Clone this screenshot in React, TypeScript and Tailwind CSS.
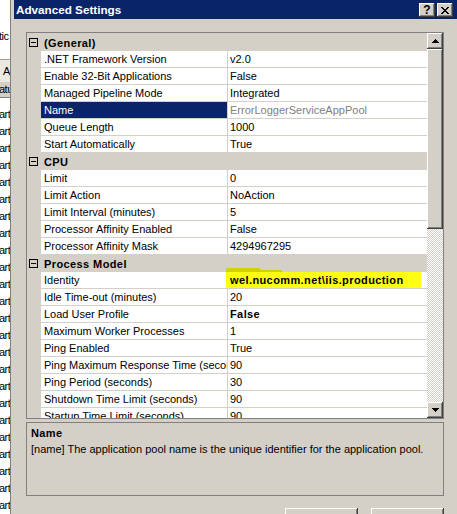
import React from "react";

type Row = {
  name: string;
  value: string;
  selected?: boolean;
  bold?: boolean;
  marked?: boolean;
  readOnly?: boolean;
};

type Section = { title: string; rows: Row[] };

const sections: Section[] = [
  {
    title: "(General)",
    rows: [
      { name: ".NET Framework Version", value: "v2.0" },
      { name: "Enable 32-Bit Applications", value: "False" },
      { name: "Managed Pipeline Mode", value: "Integrated" },
      { name: "Name", value: "ErrorLoggerServiceAppPool", selected: true, readOnly: true },
      { name: "Queue Length", value: "1000" },
      { name: "Start Automatically", value: "True" },
    ],
  },
  {
    title: "CPU",
    rows: [
      { name: "Limit", value: "0" },
      { name: "Limit Action", value: "NoAction" },
      { name: "Limit Interval (minutes)", value: "5" },
      { name: "Processor Affinity Enabled", value: "False" },
      { name: "Processor Affinity Mask", value: "4294967295" },
    ],
  },
  {
    title: "Process Model",
    rows: [
      { name: "Identity", value: "wel.nucomm.net\\iis.production", marked: true, bold: true },
      { name: "Idle Time-out (minutes)", value: "20" },
      { name: "Load User Profile", value: "False", bold: true },
      { name: "Maximum Worker Processes", value: "1" },
      { name: "Ping Enabled", value: "True" },
      { name: "Ping Maximum Response Time (seconds)", value: "90" },
      { name: "Ping Period (seconds)", value: "30" },
      { name: "Shutdown Time Limit (seconds)", value: "90" },
      { name: "Startup Time Limit (seconds)", value: "90" },
    ],
  },
];

// classic 3d raised face
const raised =
  "bg-[#d4d0c8] shadow-[inset_-1px_-1px_0_#404040,inset_1px_1px_0_#ffffff,inset_-2px_-2px_0_#808080]";

function Arrow({ down }: { down?: boolean }) {
  return (
    <svg width="7" height="4" viewBox="0 0 7 4" shapeRendering="crispEdges">
      <path d={down ? "M0 0H7L3.5 4Z" : "M3.5 0L7 4H0Z"} fill="#000" />
    </svg>
  );
}

function CloseGlyph() {
  return (
    <svg width="8" height="7" viewBox="0 0 8 7" shapeRendering="crispEdges">
      <path
        fill="#000"
        d="M0 0h2v1H0zM6 0h2v1H6zM1 1h2v1H1zM5 1h2v1H5zM2 2h4v1H2zM3 3h2v1H3zM2 4h4v1H2zM1 5h2v1H1zM5 5h2v1H5zM0 6h2v1H0zM6 6h2v1H6z"
      />
    </svg>
  );
}

// the window behind the dialog, only a sliver shows
function LeftStrip() {
  const rows = Array.from({ length: 24 });
  return (
    <div className="w-[10px] shrink-0 bg-white overflow-hidden flex flex-col text-black whitespace-nowrap tracking-[-0.5px]">
      <div className="h-[30px]" />
      <div className="h-[16px] leading-[16px] ml-[-1px]">tic</div>
      <div className="h-[16px]" />
      <div className="h-[23px] border-t border-[#a0a0a0] bg-[#ece9e2] leading-[22px] pl-[3px]">A</div>
      <div className="h-[16px] bg-[#d4d0c8] border-b border-[#808080] leading-[15px] ml-[-1px]">atu</div>
      <div className="h-[8px]" />
      {rows.map((_, i) => (
        <div key={i} className="h-[17px] leading-[17px] ml-[-1px]">
          art
        </div>
      ))}
    </div>
  );
}

function PropRow({ row }: { row: Row }) {
  return (
    <div className="flex h-[17px]">
      <div className="w-[14px] shrink-0 bg-[#d4d0c8]" />
      <div
        className={
          "w-[186px] shrink-0 h-[17px] border-b border-[#d4d0c8] pl-[3px] leading-[16px] overflow-hidden whitespace-nowrap " +
          (row.selected ? "bg-[#0a246a] text-white" : "bg-white text-black")
        }
      >
        {row.name}
      </div>
      <div className="w-px shrink-0 bg-[#d4d0c8]" />
      <div
        className={
          "relative flex-1 h-[17px] bg-white border-b border-[#d4d0c8] pl-[2px] leading-[16px] whitespace-nowrap " +
          (row.readOnly ? "text-[#808080] " : "text-black ") +
          (row.bold ? "font-bold tracking-[0.4px]" : "")
        }
      >
        {row.marked && (
          <>
            <div className="absolute left-[-2px] top-[-4px] w-[34px] h-[5px] bg-[#d2d200] rounded-tl-[2px]" />
            <div className="absolute left-[32px] top-[-2px] w-[22px] h-[3px] bg-[#d2d200]" />
            <div className="absolute left-[-2px] right-[6px] top-0 bottom-0 bg-[#ffff14]" />
          </>
        )}
        <span className="relative">{row.value}</span>
      </div>
    </div>
  );
}

function Category({ title }: { title: string }) {
  return (
    <div className="flex items-center h-[17px] bg-[#d4d0c8]">
      <div className="w-[14px] shrink-0 flex justify-end pr-[3px]">
        <div className="w-[9px] h-[9px] border border-black flex items-center justify-center">
          <div className="w-[5px] h-px bg-black" />
        </div>
      </div>
      <div className="pl-[3px] font-bold tracking-[0.4px] text-black leading-[16px]">{title}</div>
    </div>
  );
}

export default function App() {
  return (
    <div className="flex w-[457px] h-[514px] overflow-hidden bg-white font-['Liberation_Sans',Arial,sans-serif] text-[11px]">
      <LeftStrip />
      <div className="w-px shrink-0 bg-[#808080]" />
      <div className="flex-1 flex flex-col bg-[#d4d0c8] pl-[3px] min-w-0">
        {/* caption */}
        <div className="h-[19px] shrink-0 bg-[#0a246a] flex justify-between pl-[2px] pr-[4px]">
          <div className="self-center text-white font-bold text-[11.7px] leading-[19px] whitespace-nowrap">
            Advanced Settings
          </div>
          <div className="flex gap-[2px] mt-[3px]">
            <div className={raised + " w-[16px] h-[14px] flex items-center justify-center font-bold text-[12px] leading-none text-black"}>
              ?
            </div>
            <div className={raised + " w-[16px] h-[14px] flex items-center justify-center"}>
              <CloseGlyph />
            </div>
          </div>
        </div>

        <div className="pl-[12px] pt-[13px] flex flex-col">
          {/* property grid */}
          <div className="w-[418px] h-[387px] border border-[#808080] flex overflow-hidden">
            <div className="w-[400px] shrink-0 bg-[#d4d0c8] pt-px overflow-hidden">
              {sections.map((s) => (
                <div key={s.title}>
                  <Category title={s.title} />
                  {s.rows.map((r) => (
                    <PropRow key={r.name} row={r} />
                  ))}
                </div>
              ))}
            </div>
            <div className="w-[16px] shrink-0 flex flex-col">
              <div className={raised + " h-[16px] shrink-0 flex items-center justify-center"}>
                <Arrow />
              </div>
              <div className={raised + " h-[180px] shrink-0"} />
              <div className="flex-1 bg-[repeating-conic-gradient(#d4d0c8_0%_25%,#ffffff_0%_50%)] bg-[length:2px_2px]" />
              <div className={raised + " h-[16px] shrink-0 flex items-center justify-center"}>
                <Arrow down />
              </div>
            </div>
          </div>

          {/* description */}
          <div className="mt-[3px] w-[418px] h-[74px] border border-[#808080] pl-[4px] pt-[3px] text-black">
            <div className="font-bold tracking-[0.4px] leading-[15px]">Name</div>
            <div className="leading-[16px] whitespace-nowrap">
              [name] The application pool name is the unique identifier for the application pool.
            </div>
          </div>

          {/* dialog buttons */}
          <div className="mt-[12px] w-[418px] flex justify-end gap-[13px]">
            <div className={raised + " w-[73px] h-[23px]"} />
            <div className={raised + " w-[73px] h-[23px]"} />
          </div>
        </div>
      </div>
    </div>
  );
}
